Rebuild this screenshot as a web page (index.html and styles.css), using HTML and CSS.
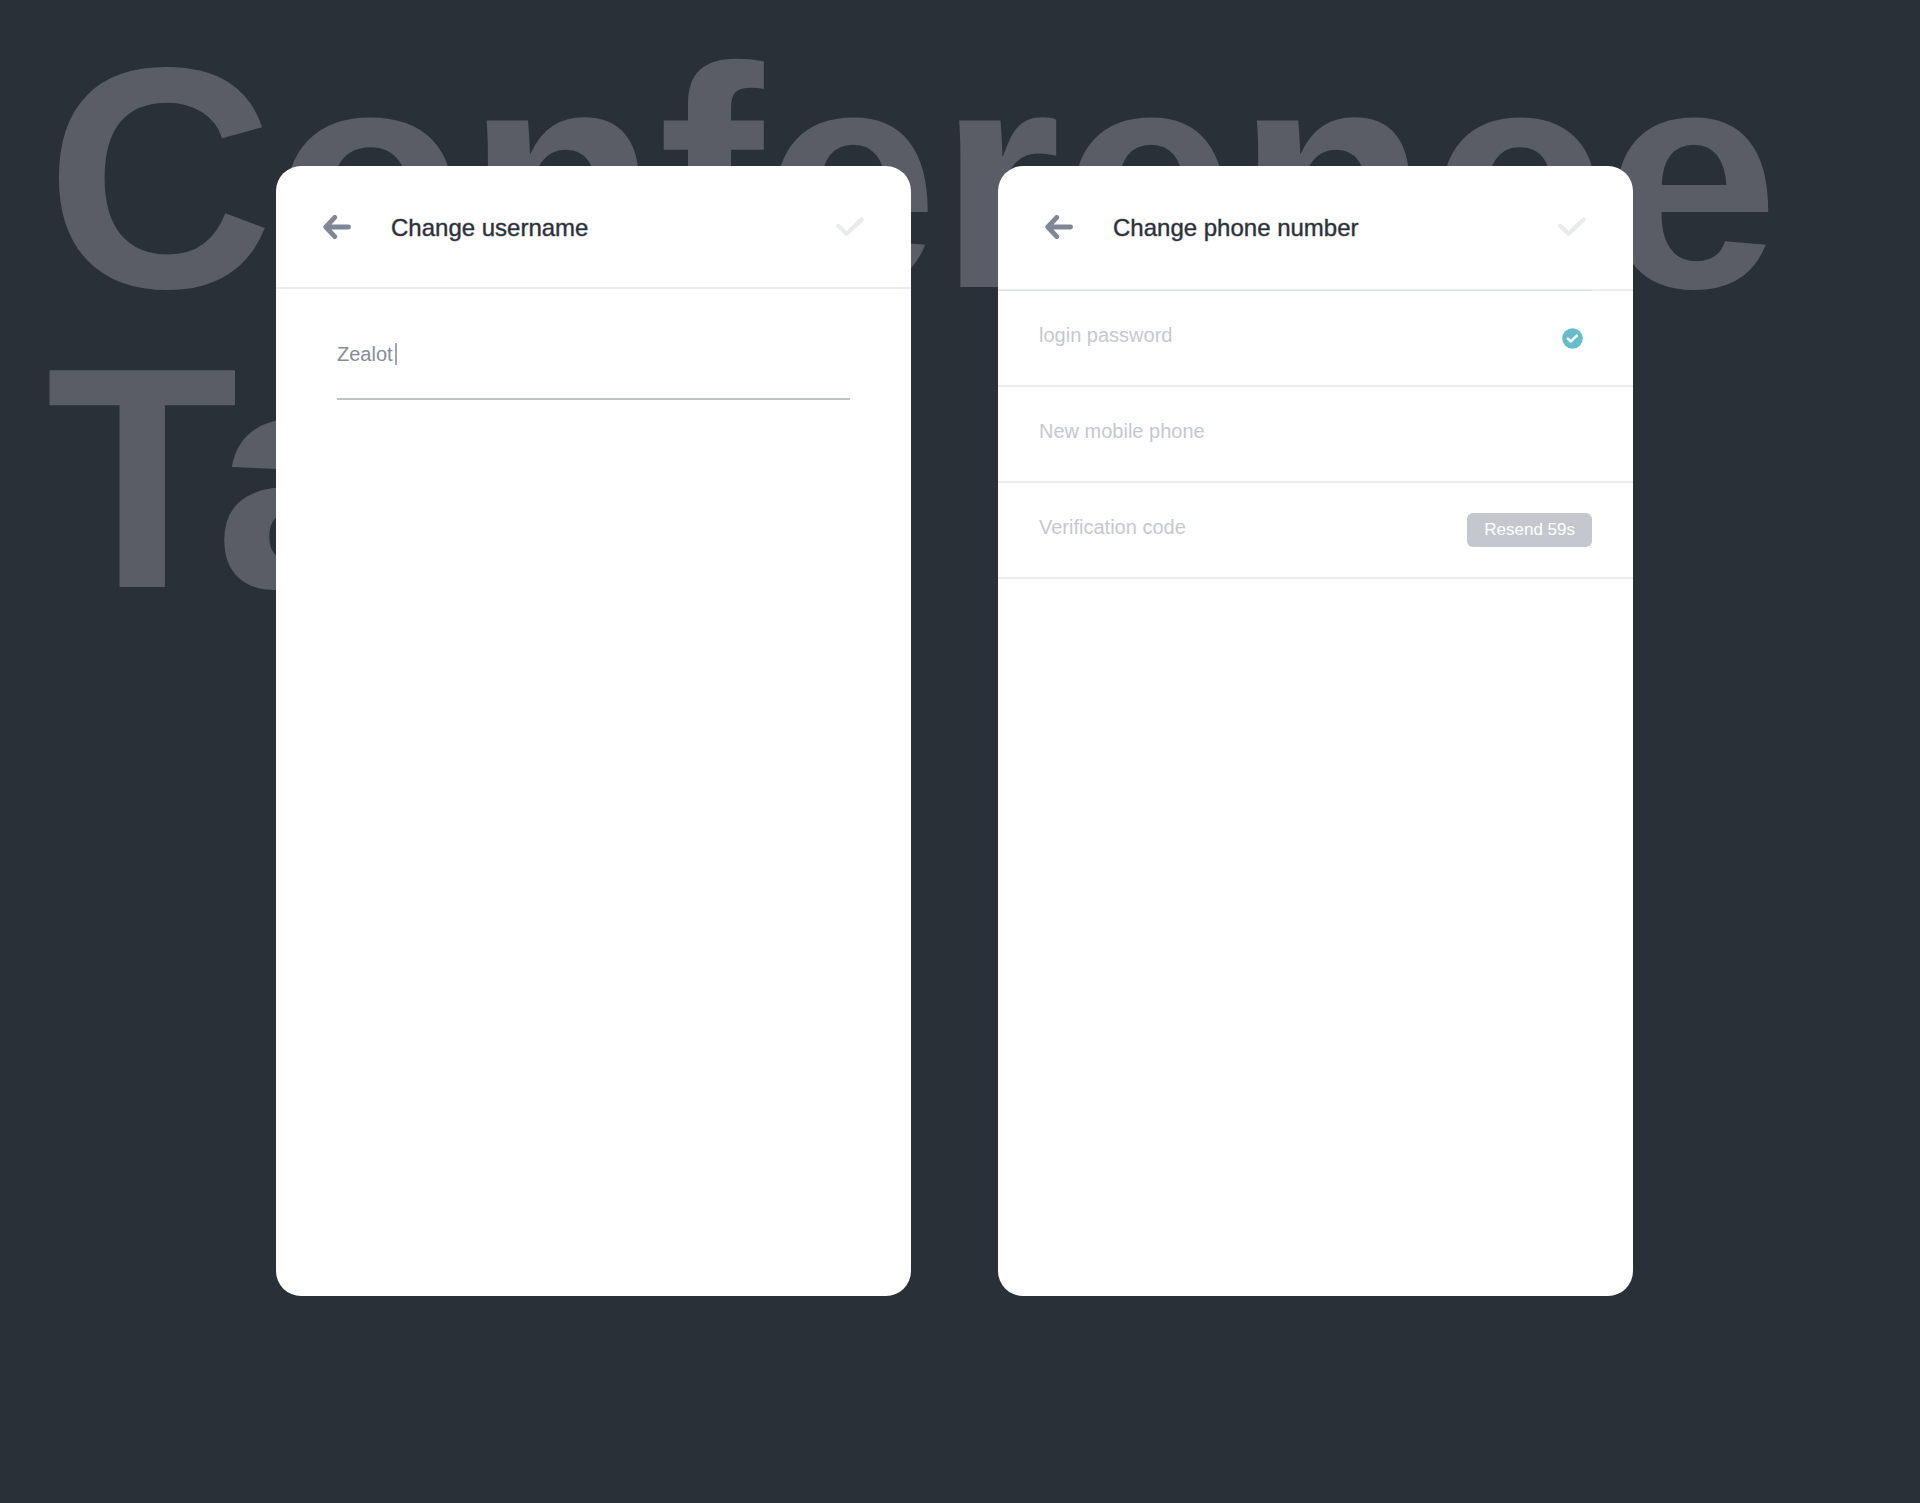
FILE: index.html
```html
<!DOCTYPE html>
<html lang="en">
<head>
    <meta charset="UTF-8">
    <meta name="viewport" content="width=device-width, initial-scale=1.0">
    <title>Conference</title>
    <link rel="stylesheet" href="styles.css">
</head>
<body>

    <!-- Big title behind the cards -->
    <h1 class="backdrop">Conference<br>Ta</h1>

    <main class="screens">
        <!-- Change username -->
        <form class="card">
            <header class="card-header">
                <button type="button" class="icon-button" aria-label="Back">
                    <svg class="icon-back" width="28" height="24" viewBox="0 0 28 24">
                        <path d="M11.8 2.4 L2.8 12 L11.8 21.6 M4 12 H25.6"/>
                    </svg>
                </button>
                <h2 class="card-title">Change username</h2>
                <button type="submit" class="icon-button" aria-label="Save">
                    <svg class="icon-save" width="28" height="20" viewBox="0 0 28 20">
                        <path d="M2.2 8.8 L10.6 16.8 L25.6 2.6"/>
                    </svg>
                </button>
            </header>
            <div class="username">
                <input class="text-input" type="text" aria-label="Username" value="Zealot">
                <span class="caret"></span>
            </div>
        </form>

        <!-- Change phone number -->
        <form class="card">
            <header class="card-header card-header-plain">
                <button type="button" class="icon-button" aria-label="Back">
                    <svg class="icon-back" width="28" height="24" viewBox="0 0 28 24">
                        <path d="M11.8 2.4 L2.8 12 L11.8 21.6 M4 12 H25.6"/>
                    </svg>
                </button>
                <h2 class="card-title">Change phone number</h2>
                <button type="submit" class="icon-button" aria-label="Save">
                    <svg class="icon-save" width="28" height="20" viewBox="0 0 28 20">
                        <path d="M2.2 8.8 L10.6 16.8 L25.6 2.6"/>
                    </svg>
                </button>
            </header>
            <div class="fields">
                <div class="field">
                    <input class="text-input" type="password" aria-label="Login password" placeholder="login password">
                    <svg class="icon-valid" width="21" height="21" viewBox="0 0 21 21">
                        <circle cx="10.5" cy="10.5" r="10.3"/>
                        <path d="M5.8 10.6 L8.8 13.4 L14.9 7.6"/>
                    </svg>
                </div>
                <div class="field">
                    <input class="text-input" type="tel" aria-label="New mobile phone" placeholder="New mobile phone">
                </div>
                <div class="field">
                    <input class="text-input" type="text" aria-label="Verification code" placeholder="Verification code">
                    <button type="button" class="resend">Resend 59s</button>
                </div>
            </div>
        </form>
    </main>

</body>
</html>
```
FILE: styles.css
```css
* {
    box-sizing: border-box;
}
body {
    margin: 0;
    min-height: 100vh;
    position: relative;
    overflow-x: hidden;
    background-color: #2a3038;
    font-family: "Liberation Sans", Arial, sans-serif;
}
.backdrop {
    position: absolute;
    top: 28px;
    left: 46px;
    margin: 0;
    font-size: 315px;
    line-height: 300px;
    font-weight: bold;
    color: #5a5d66;
}
.screens {
    position: relative;
    display: flex;
    gap: 87px;
    padding: 166px 287px 207px 276px;
}
.card {
    flex: 1;
    min-width: 0;
    min-height: 1130px;
    background-color: #fff;
    border-radius: 25px;
}

/* Card header */
.card-header {
    display: flex;
    align-items: center;
    height: 123px;
    padding: 0 47px;
    border-bottom: 2px solid #ecedf2;
}
.card-header-plain {
    border-bottom-color: transparent;
}
.card-title {
    flex: 1;
    margin: 0;
    padding: 3px 0 0 40px;
    font-size: 24px;
    line-height: 28px;
    font-weight: normal;
    color: #2b3039;
    -webkit-text-stroke: 1px rgba(43, 48, 57, 0.4);
}
.icon-button {
    display: flex;
    padding: 0;
    border: 0;
    background: none;
}
.icon-back,
.icon-save {
    fill: none;
    stroke-linecap: round;
    stroke-linejoin: round;
}
.icon-back {
    stroke: #7f8696;
    stroke-width: 4.8;
}
.icon-save {
    stroke: #e9eaec;
    stroke-width: 4.2;
}

/* Inputs */
.text-input {
    flex: 1;
    min-width: 0;
    padding: 0;
    border: 0;
    outline: 0;
    background: none;
    font-family: inherit;
    font-size: 20px;
    line-height: 24px;
    color: #858b99;
}
.text-input::placeholder {
    color: #c6c8d0;
    opacity: 1;
}
.username {
    position: relative;
    display: flex;
    margin: 0 61px;
    padding: 53px 0 32px;
    border-bottom: 2px solid #bfc2c8;
}
.caret {
    position: absolute;
    top: 54px;
    left: 58px;
    width: 2px;
    height: 22px;
    background-color: #a0a4af;
}
.fields {
    position: relative;
    border-top: 2px solid #ecedf2;
}
/* Darker part of the first line */
.fields::before {
    content: "";
    position: absolute;
    top: -1px;
    left: 0;
    right: 41px;
    height: 1px;
    background-color: #dde1e9;
}
.field {
    display: flex;
    align-items: center;
    height: 96px;
    padding: 0 41px;
    border-bottom: 2px solid #ecedf2;
}
.field .text-input {
    padding-bottom: 6px;
}
.icon-valid {
    margin-right: 9px;
}
.icon-valid circle {
    fill: #65bccb;
}
.icon-valid path {
    fill: none;
    stroke: #fff;
    stroke-width: 2.6;
    stroke-linecap: round;
    stroke-linejoin: round;
}
.resend {
    height: 34px;
    padding: 0 17px;
    border: 0;
    border-radius: 6px;
    background-color: #c5c7cf;
    font-family: inherit;
    font-size: 17px;
    color: #fff;
}

@media (max-width: 1100px) {
    .screens {
        flex-direction: column;
        padding: 166px 24px;
    }
}
```
